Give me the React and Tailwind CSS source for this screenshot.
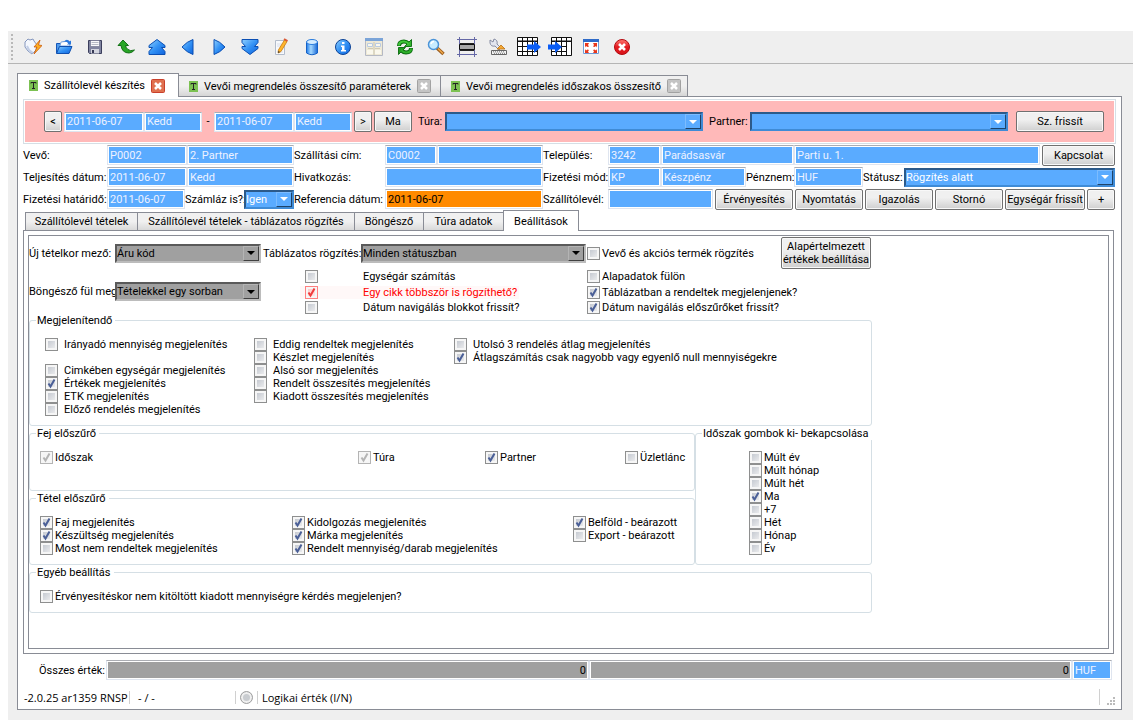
import React from "react";
import clsx from "clsx";

const toolbarIcons = [
  {
    name: "Kapcsolódás",
    art: (
      <>
        <path d="M1 4l3-3 2 1 3-1 1 2 3 4-1 5-4 4-4-3-3-4z" fill="#f4f7fd" stroke="#8496bd" />
        <path d="M3 8l2 4 4 3" fill="none" stroke="#c2cee6" strokeWidth="2" />
        <path d="M16 2l-6 7h3l-3 7 8-8.500-3.500-.5z" fill="#ffb01f" stroke="#c9590f" strokeWidth="0.8" />
      </>
    ),
  },
  {
    name: "Megnyitás",
    art: (
      <>
        <path d="M1.500 15V5.500h5l1.500-2h6V8" fill="#4e9aec" stroke="#1557b8" />
        <path d="M5 8l1-4 8-1 1 5z" fill="#fff" stroke="#7ba6de" />
        <path d="M1.500 15.500l3-7h12.500l-3 7z" fill="url(#blue)" stroke="#0f4fae" />
        <path d="M9 3.500q3-3.500 5.500 0l1.500-1v4h-4l1.300-1.300q-1.500-2-4.300-1.700z" fill="#2a78dd" />
      </>
    ),
  },
  {
    name: "Mentés",
    art: (
      <>
        <path d="M2.500 2.500h13v13h-12l-1-1z" fill="#8084a0" stroke="#3b3e5c" />
        <path d="M4.500 2.500h9v6h-9z" fill="#f8f8fb" stroke="#666a88" strokeWidth="0.6" />
        <path d="M5.500 4.500h7M5.500 6.500h7" stroke="#b7bac6" />
        <path d="M5 11h8v4.500H5z" fill="#d3d5df" />
        <path d="M6 12h2v3H6z" fill="#363955" />
      </>
    ),
  },
  {
    name: "Visszavonás",
    art: (
      <path
        d="M6 2L1 7.500h3q1 7.500 8 7.500 3 0 5.500-3-4.500 1.500-6.500-.5Q9 10 8.500 7.500h3z"
        fill="#28a626"
        stroke="#08670b"
        strokeWidth="0.9"
      />
    ),
  },
  {
    name: "Első",
    art: (
      <path
        d="M9 1.500l8 6v2h-3.500l3.500 4v3H1v-3l3.500-4H1v-2z"
        fill="url(#blue)"
        stroke="#0b4fb3"
        strokeLinejoin="round"
      />
    ),
  },
  {
    name: "Előző",
    art: <path d="M14 1.500v15q-6-2-11-7.500 5-5.500 11-7.500z" fill="url(#blue)" stroke="#0b4fb3" />,
  },
  {
    name: "Következő",
    art: <path d="M4 1.500v15q6-2 11-7.500-5-5.500-11-7.500z" fill="url(#blue)" stroke="#0b4fb3" />,
  },
  {
    name: "Utolsó",
    art: (
      <path
        d="M1 1.500h16v3l-3.500 4H17v2l-8 6-8-6v-2h3.500l-3.500-4z"
        fill="url(#blue)"
        stroke="#0b4fb3"
        strokeLinejoin="round"
      />
    ),
  },
  {
    name: "Szerkesztés",
    art: (
      <>
        <path d="M3.500 2.500h9v14h-9z" fill="#f7f9fc" stroke="#b3bccb" />
        <path d="M5 6h5M5 8h5M5 14h6" stroke="#d9deea" />
        <path d="M12.500 2l2.500 1.500-6 10-2.800 1.500.2-3z" fill="#ffb62e" stroke="#c77a0b" strokeWidth="0.8" />
        <path d="M12 1l3.500 2" stroke="#d95a37" strokeWidth="2" />
        <path d="M6 15l.4-2 1.600 1z" fill="#333" />
      </>
    ),
  },
  {
    name: "Adatbázis",
    art: (
      <>
        <path d="M3.500 4v11q5.500 3.500 11 0V4z" fill="url(#blueSide)" stroke="#1461c6" />
        <ellipse cx="9" cy="4" rx="5.500" ry="2.500" fill="#d4ecff" stroke="#2c7ddd" />
      </>
    ),
  },
  {
    name: "Információ",
    art: (
      <>
        <circle cx="9" cy="9" r="7.500" fill="url(#blue)" stroke="#0b4296" />
        <path d="M8 4h2.500v2H8zM7 7.500h3.500V12H12v1.500H7V12h1V9H7z" fill="#fff" />
      </>
    ),
  },
  {
    name: "Űrlap",
    art: (
      <>
        <path d="M.5.500h17v17H.5z" fill="#eee9d6" stroke="#b5b9c4" />
        <path d="M0 0h18v3H0z" fill="#7ba4d8" />
        <path d="M2.500 5.500h5v3h-5zM10.500 5.500h5v3h-5z" fill="#faf8ed" stroke="#b9cbe2" />
        <path d="M3 10.500h5M10 10.500h5" stroke="#cfcab3" />
        <path d="M2 12h6v4H2zM10 12h6v4h-6z" fill="#faf8ed" />
        <path d="M9 4v13" stroke="#cbc6b0" />
      </>
    ),
  },
  {
    name: "Frissítés",
    art: (
      <>
        <path d="M3 8q0-4.500 5-4.500 2.500 0 4.500 2" fill="none" stroke="#086a0d" strokeWidth="4" />
        <path d="M15.500 1.500v7H8.500z" fill="#34b52e" stroke="#086a0d" strokeWidth="0.9" />
        <path d="M3 7.500q0-4 5-4 2.500 0 5 2.500" fill="none" stroke="#3fc638" strokeWidth="2.200" />
        <path d="M15 10q0 4.500-5 4.500-2.500 0-4.500-2" fill="none" stroke="#086a0d" strokeWidth="4" />
        <path d="M2.500 16.500v-7h7z" fill="#229b20" stroke="#086a0d" strokeWidth="0.9" />
        <path d="M15 10.500q0 4-5 4-2.500 0-5-2.500" fill="none" stroke="#2fb02b" strokeWidth="2.200" />
      </>
    ),
  },
  {
    name: "Keresés",
    art: (
      <>
        <path d="M10 10l6.500 6" stroke="#9a5c1d" strokeWidth="3.500" />
        <path d="M11 10.500l5 5" stroke="#f0a94a" strokeWidth="1.500" />
        <circle cx="6.500" cy="6.500" r="5" fill="#c8ecff" stroke="#4b94d8" strokeWidth="1.500" />
        <path d="M4 6q.5-2.500 3-2.500" fill="none" stroke="#fff" strokeWidth="1.500" />
      </>
    ),
  },
  {
    name: "Vonalkód sáv",
    wide: true,
    art: (
      <>
        <path d="M2.500 0v20M17.500 0v20M0 2.500h20M0 17.500h20" stroke="#6568a6" />
        <path d="M2.500 7.500h15v5h-15z" fill="#a8a8a8" stroke="#111" />
        <path d="M3 6.500h14M3 13.500h14" stroke="#222" />
      </>
    ),
  },
  {
    name: "Beállítások",
    art: (
      <>
        <path d="M1 2l3 2 1-3q4 1 3 5l4 4-2 2-4-4q-4 1-5-3z" fill="#e2e5ef" stroke="#7c829b" strokeWidth="0.9" />
        <path d="M8 11l4-4 4 4z" fill="#f6a934" stroke="#b86e13" strokeWidth="0.8" />
        <path d="M2.500 12.500h15v4h-15z" fill="#f4f4f4" stroke="#666" />
        <path d="M4 13.800h12M5 15.300h11" stroke="#777" strokeDasharray="1 1" />
      </>
    ),
  },
  {
    name: "Táblázat exportálás",
    table: true,
    art: (
      <>
        <path d="M.5.500h20v18H.5z" fill="#fff" stroke="#111" />
        <path d="M0 4.500h21M0 9.500h21M0 14.500h21M5.500 0v19M10.500 0v19M15.500 0v19" stroke="#111" />
        <path d="M0 4h21" stroke="#111" />
        <path d="M10 7.500h7V4l7 6-7 6v-3.500h-7z" fill="#0a5cf5" />
      </>
    ),
  },
  {
    name: "Táblázat importálás",
    table: true,
    art: (
      <>
        <path d="M3.500.500h20v18h-20z" fill="#fff" stroke="#111" />
        <path d="M3 4.500h21M3 9.500h16M3 14.500h16M8.500 0v19M13.500 0v19M18.500 0v19" stroke="#111" />
        <path d="M3 4h21" stroke="#111" />
        <path d="M0 7.500h7V4l7 6-7 6v-3.500H0z" fill="#0a5cf5" />
      </>
    ),
  },
  {
    name: "Teljes képernyő",
    art: (
      <>
        <path d="M1.500 1.500h15v14h-15z" fill="#fff" stroke="#6f9cd8" />
        <path d="M1 1h16v3H1z" fill="#2f6bc8" />
        <path
          d="M3 5h4L6 7 7 8.500 5.500 9 4 8 3 9.500zM15 5h-4l1 2-1 1.500 1.500.5L14 8l1 1.500zM3 15h4l-1-1.500L7 12l-1.500-.5L4 12.500 3 11zM15 15h-4l1-1.500-1-1.500 1.500-.5 1.500 1 1-1.500z"
          fill="#e8371c"
        />
      </>
    ),
  },
  {
    name: "Kilépés",
    art: (
      <>
        <circle cx="9" cy="9" r="7.500" fill="url(#red)" stroke="#b3090f" />
        <path d="M6 6l6 6M12 6l-6 6" stroke="#fff" strokeWidth="2.600" />
      </>
    ),
  },
];

const Gradients = () => (
  <svg className="absolute size-0" aria-hidden="true">
    <defs>
      <linearGradient id="blue" x1="0" y1="0" x2="1" y2="1">
        <stop offset="0" stopColor="#8fd0ff" />
        <stop offset="0.500" stopColor="#3392f5" />
        <stop offset="1" stopColor="#0f64dd" />
      </linearGradient>
      <linearGradient id="blueSide" x1="0" y1="0" x2="1" y2="0">
        <stop offset="0" stopColor="#1f7bea" />
        <stop offset="0.400" stopColor="#a3d8ff" />
        <stop offset="1" stopColor="#1868d6" />
      </linearGradient>
      <linearGradient id="red" x1="0" y1="0" x2="0" y2="1">
        <stop offset="0" stopColor="#ff7a72" />
        <stop offset="0.500" stopColor="#e41b20" />
        <stop offset="1" stopColor="#d8141a" />
      </linearGradient>
    </defs>
  </svg>
);

const ToolbarIcon = ({ icon }) => {
  if (icon.table) {
    return (
      <svg className="shrink-0" width="24" height="20" viewBox="0 0 24 20" aria-hidden="true">
        {icon.art}
      </svg>
    );
  }
  if (icon.wide) {
    return (
      <svg className="shrink-0" width="20" height="20" viewBox="0 0 20 20" aria-hidden="true">
        {icon.art}
      </svg>
    );
  }
  return (
    <svg className="shrink-0" width="18" height="18" viewBox="0 0 18 18" aria-hidden="true">
      {icon.art}
    </svg>
  );
};

const Toolbar = () => (
  <div className="flex h-[33px] items-center border-b border-[#b5b5b5]">
    <div className="mr-1 ml-[3px] h-[26px] border-l-2 border-dotted border-[#b9b9b9]" />
    {toolbarIcons.map((icon) => (
      <button key={icon.name} type="button" aria-label={icon.name} className="flex w-[31px] items-center justify-center">
        <ToolbarIcon icon={icon} />
      </button>
    ))}
  </div>
);

const Field = ({ label, value = "", id, className, tone = "blue" }) => (
  <input
    id={id}
    type="text"
    aria-label={label}
    defaultValue={value}
    className={clsx(
      "h-5 min-w-0 rounded-none border border-[#dfe5ef] border-t-[#abadb3] px-0.5 shadow-[inset_0_0_0_1px_#ffffff] outline-none",
      tone === "blue" && "bg-[#5aabff] text-[#eef2ff]",
      tone === "orange" && "bg-[#ff8a00] text-black",
      tone === "gray" && "bg-[#a0a0a0] text-right text-black",
      className
    )}
  />
);

const Combo = ({ label, value = "", id, className, tone = "blue" }) => (
  <span className={clsx("relative flex h-[19px]", className)}>
    <select
      id={id}
      aria-label={label}
      defaultValue={value}
      className={clsx(
        "w-full appearance-none rounded-none border-2 pr-4 outline-none",
        tone === "blue" && "border-t-[#2c5a8a] border-r-[#3f8bd6] border-b-[#3f8bd6] border-l-[#2c5a8a] bg-[#5aabff] text-white",
        tone === "gray" && "border-t-[#5a5a5a] border-r-[#bcbcbc] border-b-[#bcbcbc] border-l-[#5a5a5a] bg-[#a0a0a0] text-black"
      )}
    >
      <option>{value}</option>
    </select>
    <span
      className={clsx(
        "pointer-events-none absolute top-[2px] right-[2px] bottom-[2px] flex w-4 items-center justify-center border",
        tone === "blue"
          ? "border-t-[#7cbcff] border-r-[#1f4368] border-b-[#1f4368] border-l-[#7cbcff] text-white"
          : "border-t-[#b4b4b4] border-r-[#404040] border-b-[#404040] border-l-[#b4b4b4] text-black"
      )}
    >
      <svg width="8" height="4" viewBox="0 0 8 4" aria-hidden="true">
        <path d="M0 0h8L4 4z" fill="currentColor" />
      </svg>
    </span>
  </span>
);

const Button = ({ children, className }) => (
  <button
    type="button"
    className={clsx(
      "min-h-[21px] shrink-0 rounded-[2px] border border-[#707070] bg-linear-to-b from-[#f0f0f0] from-40% to-[#cfcfcf] text-center whitespace-nowrap shadow-[inset_0_0_0_1px_#f8f8f8]",
      className
    )}
  >
    {children}
  </button>
);

const Label = ({ htmlFor, children, className }) => (
  <label htmlFor={htmlFor} className={clsx("shrink-0 whitespace-nowrap", className)}>
    {children}
  </label>
);

const Check = ({ label, checked, disabled, wide, alert, far }) => (
  <label
    className={clsx(
      "flex h-[13px] items-center whitespace-nowrap",
      wide && "gap-1.5",
      far && "gap-[45px]",
      !wide && !far && "gap-0.5",
      alert && "text-[#ff0000]"
    )}
  >
    <span className="relative flex size-[13px] shrink-0">
      <input
        type="checkbox"
        defaultChecked={checked}
        disabled={disabled}
        className={clsx(
          "peer size-[13px] appearance-none border bg-linear-to-br shadow-[inset_0_0_0_2px_#f6f6f6]",
          alert && "border-[#ff8080] from-[#ffc0c0] to-[#fff0f0]",
          disabled && "border-[#b4b4b4] from-[#f2f2f2] to-[#fafafa]",
          !alert && !disabled && "border-[#8e8f8f] from-[#bcc1ca] to-[#f4f4f4]"
        )}
      />
      <svg
        className={clsx(
          "pointer-events-none absolute inset-0 hidden peer-checked:block",
          alert ? "text-[#f03c3c]" : disabled ? "text-[#b4b4b4]" : "text-[#4a5f97]"
        )}
        width="13"
        height="13"
        viewBox="0 0 13 13"
        aria-hidden="true"
      >
        <path d="M3.500 6.500l2 3 4-7" fill="none" stroke="currentColor" strokeWidth="2" />
      </svg>
    </span>
    {label}
  </label>
);

const Group = ({ title, children, className }) => (
  <fieldset className={clsx("min-w-0 rounded-[3px] border border-[#d5dfe5]", className)}>
    <legend className="ml-1.5 pr-[3px] pl-px leading-[13px] whitespace-nowrap">{title}</legend>
    {children}
  </fieldset>
);

const DocTab = ({ children, active, className }) => (
  <div
    className={clsx(
      "flex items-center gap-1.5 border border-b-0 border-[#898c95]",
      active
        ? "-mb-px h-6 bg-white pr-[15px] pl-[11px]"
        : "h-[21px] border-l-0 bg-linear-to-b from-[#f0f0f0] from-50% to-[#d6d6d6] pr-[13px] pl-[10px]",
      className
    )}
  >
    <svg className="shrink-0" width="9" height="11" viewBox="0 0 9 11" aria-hidden="true">
      <path d="M0 0h9v11H0z" fill="#7cc152" />
      <path d="M2 3.500V2.500h5v1M4.500 2.500V8M3 8.500h3" fill="none" stroke="#222" />
    </svg>
    <button type="button" className="whitespace-nowrap">
      {children}
    </button>
    <button type="button" aria-label="Bezárás" className="ml-auto shrink-0">
      <svg width="14" height="14" viewBox="0 0 14 14" aria-hidden="true">
        <rect
          x="0.5"
          y="0.5"
          width="13"
          height="13"
          rx="1"
          fill={active ? "#e0714f" : "#c4c4c4"}
          stroke={active ? "#c9402b" : "#a2a2a2"}
        />
        <path d="M4 4l6 6M10 4l-6 6" stroke="#fff" strokeWidth="2.500" />
      </svg>
    </button>
  </div>
);

const FormTab = ({ children, active, className }) => (
  <button
    type="button"
    className={clsx(
      "border border-b-0 border-[#898c95] text-center whitespace-nowrap",
      active ? "-mb-px h-[21px] bg-white" : "h-[18px] bg-linear-to-b from-[#f0f0f0] from-50% to-[#d9d9d9]",
      className
    )}
  >
    {children}
  </button>
);

const FilterBar = () => (
  <div className="flex h-[45px] items-center border border-[#d5dfe5] bg-[#ffb9b9] pr-[11px] pl-5 shadow-[inset_0_0_0_1px_#ffffff]">
    <Button className="w-[18px]">&lt;</Button>
    <Field label="Kezdő dátum" value="2011-06-07" className="ml-0.5 w-20" />
    <Field label="Kezdő nap" value="Kedd" className="w-[58px]" />
    <span className="w-3 text-center">-</span>
    <Field label="Záró dátum" value="2011-06-07" className="w-20" />
    <Field label="Záró nap" value="Kedd" className="w-[58px]" />
    <Button className="ml-0.5 w-[18px]">&gt;</Button>
    <Button className="ml-0.5 w-[38px]">Ma</Button>
    <Label htmlFor="tura" className="ml-1.5 w-[27px]">
      Túra:
    </Label>
    <Combo id="tura" className="flex-1" />
    <Label htmlFor="partner" className="ml-1.5 w-[41px]">
      Partner:
    </Label>
    <Combo id="partner" className="flex-1" />
    <Button className="ml-2 w-[88px]">Sz. frissít</Button>
  </div>
);

const Header = () => (
  <div className="pr-px">
    <div className="flex h-[22px] items-center">
      <Label htmlFor="vevo" className="w-[84px]">
        Vevő:
      </Label>
      <Field id="vevo" value="P0002" className="w-20" />
      <Field label="Vevő neve" value="2. Partner" className="w-[107px]" />
      <Label htmlFor="cim" className="w-[91px]">
        Szállítási cím:
      </Label>
      <Field id="cim" value="C0002" className="w-[52px]" />
      <Field label="Cím neve" className="w-[106px]" />
      <Label htmlFor="telepules" className="w-[65px]">
        Település:
      </Label>
      <Field id="telepules" value="3242" className="w-[53px]" />
      <Field label="Település neve" value="Parádsasvár" className="w-[133px]" />
      <Field label="Utca" value="Parti u. 1." className="flex-1" />
      <Button className="ml-0.5 w-[73px]">Kapcsolat</Button>
    </div>
    <div className="flex h-[22px] items-center">
      <Label htmlFor="teljesites" className="w-[84px]">
        Teljesítés dátum:
      </Label>
      <Field id="teljesites" value="2011-06-07" className="w-20" />
      <Field label="Teljesítés napja" value="Kedd" className="w-[107px]" />
      <Label htmlFor="hivatkozas" className="w-[91px]">
        Hivatkozás:
      </Label>
      <Field id="hivatkozas" className="w-[158px]" />
      <Label htmlFor="fizmod" className="w-[65px]">
        Fizetési mód:
      </Label>
      <Field id="fizmod" value="KP" className="w-[53px]" />
      <Field label="Fizetési mód neve" value="Készpénz" className="w-[85px]" />
      <Label htmlFor="penznem" className="w-12">
        Pénznem:
      </Label>
      <Field id="penznem" value="HUF" className="w-[69px]" />
      <Label htmlFor="statusz" className="w-[41px]">
        Státusz:
      </Label>
      <Combo id="statusz" value="Rögzítés alatt" className="flex-1" />
    </div>
    <div className="flex h-[22px] items-center">
      <Label htmlFor="hatarido" className="w-[84px]">
        Fizetési határidő:
      </Label>
      <Field id="hatarido" value="2011-06-07" className="w-[78px]" />
      <Label htmlFor="szamlaz" className="w-[59px]">
        Számláz is?:
      </Label>
      <Combo id="szamlaz" value="Igen" className="w-[50px]" />
      <Label htmlFor="referencia" className="w-[91px]">
        Referencia dátum:
      </Label>
      <Field id="referencia" value="2011-06-07" tone="orange" className="w-[158px]" />
      <Label htmlFor="szallitolevel" className="w-[65px]">
        Szállítólevél:
      </Label>
      <Field id="szallitolevel" className="flex-1" />
      <div className="ml-0.5 flex gap-0.5">
        <Button className="w-[78px]">Érvényesítés</Button>
        <Button className="w-[68px]">Nyomtatás</Button>
        <Button className="w-[68px]">Igazolás</Button>
        <Button className="w-[68px]">Stornó</Button>
        <Button className="w-20">Egységár frissít</Button>
        <Button className="w-7">+</Button>
      </div>
    </div>
  </div>
);

const Settings = () => (
  <div className="h-[414px] border border-[#898c95] pt-px">
    <div className="flex h-8 items-center">
      <Label htmlFor="ujtetel" className="w-[86px]">
        Új tételkor mező:
      </Label>
      <Combo id="ujtetel" value="Áru kód" tone="gray" className="w-[146px]" />
      <Label htmlFor="tablazatos" className="ml-0.5 w-[98px]">
        Táblázatos rögzítés:
      </Label>
      <Combo id="tablazatos" value="Minden státuszban" tone="gray" className="w-[225px]" />
      <div className="ml-px w-[194px]">
        <Check label="Vevő és akciós termék rögzítés" />
      </div>
      <Button className="h-8 w-[90px] leading-[13px]">
        Alapértelmezett
        <br />
        értékek beállítása
      </Button>
    </div>
    <div className="flex h-[45px] items-center">
      <Label htmlFor="bongeszo" className="w-[86px]">
        Böngésző fül meg
      </Label>
      <Combo id="bongeszo" value="Tételekkel egy sorban" tone="gray" className="w-[146px]" />
      <div className="ml-[39px] flex h-full w-[243px] flex-col justify-between pt-px">
        <div className="pl-[5px]">
          <Check label="Egységár számítás" far />
        </div>
        <div className="w-[219px] bg-[#fff8f8] pl-[5px]">
          <Check label="Egy cikk többször is rögzíthető?" far alert checked />
        </div>
        <div className="pl-[5px]">
          <Check label="Dátum navigálás blokkot frissít?" far />
        </div>
      </div>
      <div className="ml-[44px] flex h-full flex-col justify-between pt-px">
        <Check label="Alapadatok fülön" />
        <Check label="Táblázatban a rendeltek megjelenjenek?" checked />
        <Check label="Dátum navigálás előszűrőket frissít?" checked />
      </div>
    </div>

    <div className="flex w-[843px] flex-col gap-px">
      <Group title="Megjelenítendő">
        <div className="grid grid-cols-[209px_200px_1fr] pt-[11px] pb-[9px] pl-[15px]">
          <div>
            <Check label="Irányadó mennyiség megjelenítés" wide />
            <div className="h-[13px]" />
            <Check label="Cimkében egységár megjelenítés" wide />
            <Check label="Értékek megjelenítés" wide checked />
            <Check label="ETK megjelenítés" wide />
            <Check label="Előző rendelés megjelenítés" wide />
          </div>
          <div>
            <Check label="Eddig rendeltek megjelenítés" wide />
            <Check label="Készlet megjelenítés" wide />
            <Check label="Alsó sor megjelenítés" wide />
            <Check label="Rendelt összesítés megjelenítés" wide />
            <Check label="Kiadott összesítés megjelenítés" wide />
          </div>
          <div>
            <Check label="Utolsó 3 rendelés átlag megjelenítés" wide />
            <Check label="Átlagszámítás csak nagyobb vagy egyenlő null mennyiségekre" wide checked />
          </div>
        </div>
      </Group>

      <div className="flex">
        <div className="flex flex-1 flex-col gap-px">
          <Group title="Fej előszűrő">
            <div className="grid grid-cols-[318px_127px_140px_1fr] pt-[11px] pb-[26px] pl-2.5">
              <Check label="Időszak" checked disabled />
              <Check label="Túra" checked disabled />
              <Check label="Partner" checked />
              <Check label="Üzletlánc" />
            </div>
          </Group>
          <Group title="Tétel előszűrő">
            <div className="grid grid-cols-[252px_281px_1fr] pt-[11px] pb-[9px] pl-2.5">
              <div>
                <Check label="Faj megjelenítés" checked />
                <Check label="Készültség megjelenítés" checked />
                <Check label="Most nem rendeltek megjelenítés" />
              </div>
              <div>
                <Check label="Kidolgozás megjelenítés" checked />
                <Check label="Márka megjelenítés" checked />
                <Check label="Rendelt mennyiség/darab megjelenítés" checked />
              </div>
              <div>
                <Check label="Belföld - beárazott" checked />
                <Check label="Export - beárazott" />
              </div>
            </div>
          </Group>
        </div>
        <Group title="Időszak gombok ki- bekapcsolása" className="w-[177px]">
          <div className="pt-[11px] pl-[53px]">
            <Check label="Múlt év" />
            <Check label="Múlt hónap" />
            <Check label="Múlt hét" />
            <Check label="Ma" checked />
            <Check label="+7" />
            <Check label="Hét" />
            <Check label="Hónap" />
            <Check label="Év" />
          </div>
        </Group>
      </div>

      <Group title="Egyéb beállítás">
        <div className="pt-[11px] pb-[9px] pl-2.5">
          <Check label="Érvényesítéskor nem kitöltött kiadott mennyiségre kérdés megjelenjen?" />
        </div>
      </Group>
    </div>
  </div>
);

const StatusBar = () => (
  <div className="flex h-[18px] items-center font-['Open_Sans',sans-serif]">
    <span className="w-[107px] border-r border-[#d0d0d0] pl-px whitespace-nowrap">-2.0.25 ar1359 RNSP</span>
    <span className="w-[106px] border-r border-[#d0d0d0] pl-2">- / -</span>
    <input
      id="logikai"
      type="radio"
      className="mx-1 size-[13px] appearance-none rounded-full border border-[#a0a0a0] bg-[#c9ccd0] shadow-[inset_0_0_0_2px_#f0f0f0]"
    />
    <label htmlFor="logikai" className="border-l border-[#d0d0d0] pl-1">
      Logikai érték (I/N)
    </label>
    <span className="ml-auto h-4 border-l border-[#d0d0d0]" />
    <svg className="ml-[7px] self-end" width="9" height="9" viewBox="0 0 9 9" aria-hidden="true">
      <path d="M6 0h2v2H6zM3 3h2v2H3zM6 3h2v2H6zM0 6h2v2H0zM3 6h2v2H3zM6 6h2v2H6z" fill="#bbb" />
    </svg>
  </div>
);

const App = () => {
  return (
    <div className="min-h-screen bg-white px-2 pt-[31px] pb-2 font-['Roboto','Noto_Sans',sans-serif] text-[11px] leading-[13px] text-black">
      <Gradients />
      <div className="bg-[#efefef] pb-[10px]">
        <Toolbar />
        <div className="px-[9px] pt-[9px]">
          <div className="flex items-end">
            <DocTab active className="w-[162px]">
              Szállítólevél készítés
            </DocTab>
            <DocTab className="w-[262px]">Vevői megrendelés összesítő paraméterek</DocTab>
            <DocTab className="w-[247px]">Vevői megrendelés időszakos összesítő</DocTab>
          </div>
          <div className="mr-[2px] border border-[#898c95] bg-white px-[5px] pt-[2px] pb-[3px]">
            <FilterBar />
            <Header />
            <div className="flex items-end pl-[2px]">
              <FormTab className="w-[113px]">Szállítólevél tételek</FormTab>
              <FormTab className="-ml-px w-[218px]">Szállítólevél tételek - táblázatos rögzítés</FormTab>
              <FormTab className="-ml-px w-[70px]">Böngésző</FormTab>
              <FormTab className="-ml-px w-[81px]">Túra adatok</FormTab>
              <FormTab active className="-ml-px w-[76px]">
                Beállítások
              </FormTab>
            </div>
            <div className="mr-[2px] border border-[#898c95] p-1">
              <Settings />
            </div>
            <div className="mt-1.5 mb-2 flex items-center pr-1">
              <Label htmlFor="osszes" className="w-[83px] pr-px text-right">
                Összes érték:
              </Label>
              <Field id="osszes" value="0" tone="gray" className="flex-1" />
              <Field label="Összes érték 2" value="0" tone="gray" className="flex-1" />
              <Field label="Pénznem" value="HUF" className="w-10" />
            </div>
            <StatusBar />
          </div>
        </div>
      </div>
    </div>
  );
};

export default App;
